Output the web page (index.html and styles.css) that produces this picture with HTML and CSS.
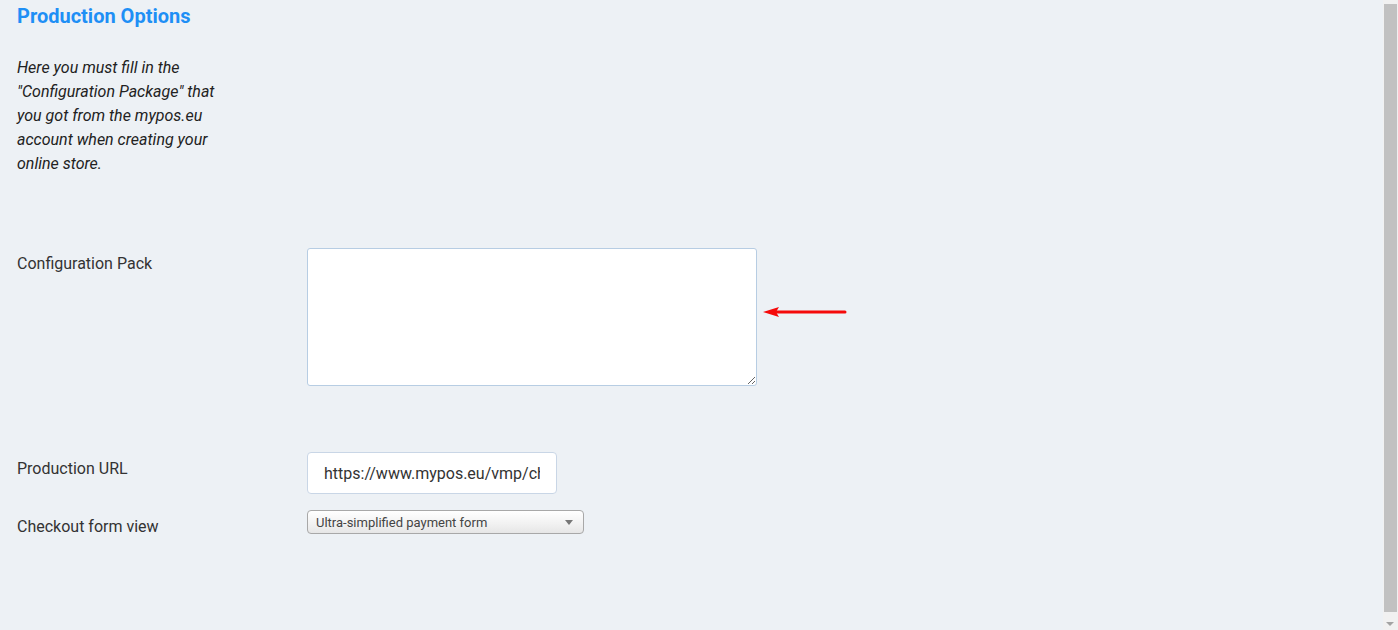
FILE: index.html
```html
<!DOCTYPE html>
<html>
<head>
<meta charset="utf-8">
<link rel="stylesheet" href="styles.css">
</head>
<body>
<div class="page">
  <h2 class="title">Production Options</h2>
  <p class="intro">Here you must fill in the "Configuration Package" that you got from the mypos.eu account when creating your online store.</p>

  <div class="row row-config">
    <label class="label">Configuration Pack</label>
    <div class="field field-config">
      <textarea class="textarea"></textarea>
      <svg class="arrow" width="84" height="14" viewBox="0 0 84 14">
        <line x1="12" y1="7" x2="82" y2="7" stroke="#f50a0a" stroke-width="3" stroke-linecap="round"/>
        <polygon points="0,7 16,2 13,7 16,12" fill="#f50a0a"/>
      </svg>
    </div>
  </div>

  <div class="row row-url">
    <label class="label">Production URL</label>
    <input class="input" type="text" value="https://www.mypos.eu/vmp/checkout">
  </div>

  <div class="row row-select">
    <label class="label">Checkout form view</label>
    <div class="select">
      <span>Ultra-simplified payment form</span>
      <span class="caret"></span>
    </div>
  </div>
</div>

<div class="scrollbar">
  <div class="thumb"></div>
  <div class="down"></div>
</div>
</body>
</html>
```

FILE: styles.css
```css
html, body {
  margin: 0;
  padding: 0;
  height: 100%;
  overflow: hidden;
}
body {
  background: #edf1f5;
  font-family: Roboto, "Liberation Sans", sans-serif;
  color: #333;
}
.page {
  padding: 5px 0 0 17px;
  width: 1360px;
  box-sizing: border-box;
}
.title {
  margin: 0;
  font-size: 20px;
  line-height: 22px;
  font-weight: 700;
  color: #1e8ff5;
}
.intro {
  margin: 29px 0 0 0;
  width: 210px;
  font-size: 16px;
  line-height: 24px;
  font-style: italic;
  color: #222;
}
.row {
  display: flex;
  align-items: flex-start;
}
.label {
  width: 290px;
  flex: none;
  font-size: 16px;
  line-height: 20px;
  color: #333;
}
.row-config {
  margin-top: 72px;
}
.row-config .label {
  padding-top: 6px;
}
.field-config {
  display: flex;
  align-items: center;
}
.textarea {
  width: 450px;
  height: 138px;
  box-sizing: border-box;
  border: 1px solid #b7cde3;
  border-radius: 3px;
  background: #fff;
  margin: 0;
  resize: both;
}
.arrow {
  margin-left: 6px;
  margin-top: -10px;
}
.row-url {
  margin-top: 66px;
}
.row-url .label {
  padding-top: 7px;
}
.input {
  width: 250px;
  height: 42px;
  box-sizing: border-box;
  border: 1px solid #c9d6e6;
  border-radius: 4px;
  background: #fff;
  margin: 0;
  padding: 0 16px;
  font-family: Roboto, "Liberation Sans", sans-serif;
  font-size: 16px;
  color: #333;
}
.row-select {
  margin-top: 16px;
}
.row-select .label {
  padding-top: 7px;
}
.select {
  width: 277px;
  height: 24px;
  box-sizing: border-box;
  border: 1px solid #a8a8a8;
  border-radius: 4px;
  background: linear-gradient(#ffffff, #f1f1f1 60%, #e6e6e6);
  display: flex;
  align-items: center;
  justify-content: space-between;
  padding: 0 10px 0 8px;
  font-size: 13px;
  color: #444;
}
.caret {
  width: 0;
  height: 0;
  border-left: 4px solid transparent;
  border-right: 4px solid transparent;
  border-top: 5px solid #777;
}
.scrollbar {
  position: fixed;
  top: 0;
  right: 0;
  width: 15px;
  height: 630px;
  background: #f1f1f1;
}
.thumb {
  position: absolute;
  top: 4px;
  left: 1px;
  width: 13px;
  height: 608px;
  background: #c1c1c1;
}
.down {
  position: absolute;
  left: 3px;
  bottom: 4px;
  width: 0;
  height: 0;
  border-left: 4px solid transparent;
  border-right: 4px solid transparent;
  border-top: 4px solid #a3a3a3;
}
```
